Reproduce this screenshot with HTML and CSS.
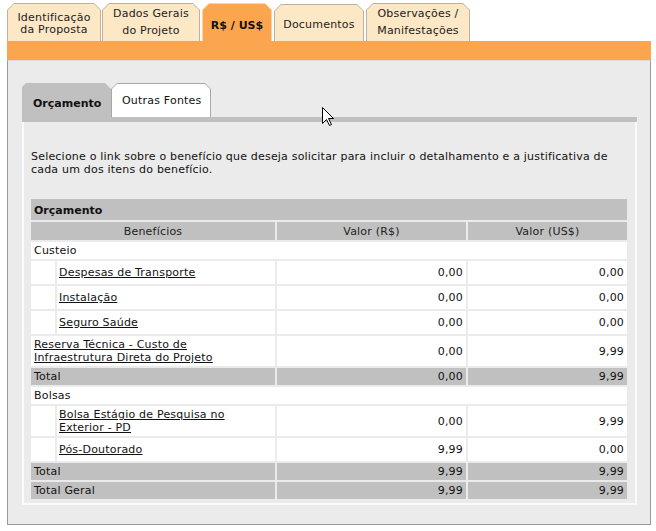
FILE: index.html
```html
<!DOCTYPE html>
<html lang="pt">
<head>
<meta charset="utf-8">
<title>Orçamento</title>
<link rel="stylesheet" href="styles.css">
</head>
<body>
<div class="page">
  <div class="tabs">
    <div class="tab t1"><div class="tab-in two-tight">Identificação<br>da Proposta</div></div>
    <div class="tab t2"><div class="tab-in two">Dados Gerais<br>do Projeto</div></div>
    <div class="tab t3 active"><div class="tab-in">R$ / US$</div></div>
    <div class="tab t4"><div class="tab-in">Documentos</div></div>
    <div class="tab t5"><div class="tab-in two">Observações /<br>Manifestações</div></div>
  </div>
  <div class="bar"></div>
  <div class="panel">
    <div class="subtabs">
      <div class="subtab sub-active">Orçamento</div>
      <div class="subtab sub-idle"><div class="sub-in">Outras Fontes</div></div>
    </div>
    <div class="subbar"></div>
    <div class="content">
      <p class="intro">Selecione o link sobre o benefício que deseja solicitar para incluir o detalhamento e a justificativa de cada um dos itens do benefício.</p>
      <table class="budget">
        <colgroup>
          <col class="c-ind"><col class="c-name"><col class="c-brl"><col class="c-usd">
        </colgroup>
        <tr class="title"><td colspan="4">Orçamento</td></tr>
        <tr class="head"><td colspan="2">Benefícios</td><td>Valor (R$)</td><td>Valor (US$)</td></tr>
        <tr class="group"><td colspan="4">Custeio</td></tr>
        <tr class="item"><td></td><td class="name"><a href="#">Despesas de Transporte</a></td><td class="num">0,00</td><td class="num">0,00</td></tr>
        <tr class="item"><td></td><td class="name"><a href="#">Instalação</a></td><td class="num">0,00</td><td class="num">0,00</td></tr>
        <tr class="item"><td></td><td class="name"><a href="#">Seguro Saúde</a></td><td class="num">0,00</td><td class="num">0,00</td></tr>
        <tr class="item"><td colspan="2"><a href="#">Reserva Técnica - Custo de<br>Infraestrutura Direta do Projeto</a></td><td class="num">0,00</td><td class="num">9,99</td></tr>
        <tr class="total"><td colspan="2">Total</td><td class="num">0,00</td><td class="num">9,99</td></tr>
        <tr class="group"><td colspan="4">Bolsas</td></tr>
        <tr class="item"><td></td><td class="name"><a href="#">Bolsa Estágio de Pesquisa no<br>Exterior - PD</a></td><td class="num">0,00</td><td class="num">9,99</td></tr>
        <tr class="item"><td></td><td class="name"><a href="#">Pós-Doutorado</a></td><td class="num">9,99</td><td class="num">0,00</td></tr>
        <tr class="total"><td colspan="2">Total</td><td class="num">9,99</td><td class="num">9,99</td></tr>
        <tr class="total"><td colspan="2">Total Geral</td><td class="num">9,99</td><td class="num">9,99</td></tr>
      </table>
    </div>
    <svg class="cursor" width="13" height="20" viewBox="0 0 13 20"><path d="M0.5 0.5 L0.5 16.5 L4.5 12.5 L7.5 18.5 L9.5 17.5 L6.5 11.5 L11.5 11.5 Z" fill="#fff" stroke="#000" stroke-width="1"/></svg>
  </div>
</div>
</body>
</html>
```

FILE: styles.css
```css
* { box-sizing: border-box; }
html, body { margin: 0; padding: 0; background: #fff; }
body {
  font-family: "DejaVu Sans", Verdana, sans-serif;
  font-size: 11px;
  letter-spacing: 0.2px;
  line-height: 13px;
  color: #111;
}
.page { width: 656px; height: 531px; padding: 3px 0 0 7px; }
.tabs { display: flex; align-items: flex-end; height: 38px; }
.tab {
  height: 38px;
  padding: 1px 1px 0 1px;
  background: #bfb19d;
  clip-path: polygon(7px 0, calc(100% - 7px) 0, 100% 7px, 100% 100%, 0 100%, 0 7px);
  margin-right: 2px;
}
.tab-in {
  height: 100%;
  background: #fde8c6;
  clip-path: polygon(6px 0, calc(100% - 6px) 0, 100% 6px, 100% 100%, 0 100%, 0 6px);
  display: flex;
  align-items: center;
  justify-content: center;
  text-align: center;
  color: #222;
}
.two { line-height: 17px; padding-bottom: 2px; }
.two-tight { line-height: 12px; padding-top: 3px; }
.t1 { width: 94px; margin-right: 1px; }
.t2 { width: 98px; }
.t3 { width: 70px; margin-right: 2px; }
.t4 { width: 90px; height: 37px; }
.t4 .tab-in { padding-top: 3px; }
.t5 { width: 104px; }
.active { background: #fdd3a3; }
.active .tab-in { background: #fba64f; font-weight: bold; letter-spacing: 0; color: #111; padding-top: 5px; }
.bar { width: 644px; height: 19px; background: #fba64f; }
.panel {
  position: relative;
  width: 644px;
  height: 465px;
  background: #ebebeb;
  border: 1px solid #999;
  border-top-color: #d8d8d8;
  padding: 22px 0 0 14px;
}
.subtabs { display: flex; align-items: flex-end; height: 34px; }
.subtab { height: 34px; }
.sub-active {
  width: 89px;
  height: 39px;
  margin-bottom: -5px;
  background: #c0c0c0;
  font-weight: bold;
  letter-spacing: 0;
  padding: 14px 0 0 11px;
  clip-path: polygon(4px 0, calc(100% - 6px) 0, 100% 6px, 100% 100%, 0 100%, 0 4px);
  position: relative;
  z-index: 1;
}
.sub-idle {
  width: 100px;
  padding: 1px 1px 0 1px;
  background: #a8a8a8;
  clip-path: polygon(6px 0, calc(100% - 6px) 0, 100% 6px, 100% 100%, 0 100%, 0 6px);
}
.sub-in {
  height: 100%;
  background: #fff;
  clip-path: polygon(5px 0, calc(100% - 5px) 0, 100% 5px, 100% 100%, 0 100%, 0 5px);
  padding: 10px 0 0 10px;
}
.subbar { width: 615px; height: 5px; background: #c0c0c0; }
.content {
  width: 615px;
  height: 383px;
  border: 2px solid #fafafa;
  border-top: none;
  padding: 28px 6px 0 5px;
}
.intro { margin: 0 0 21px 2px; color: #111; }
.budget {
  width: 600px;
  border-collapse: separate;
  border-spacing: 2px;
  table-layout: fixed;
  background: #ebebeb;
}
.c-ind { width: 24px; }
.c-name { width: 218px; }
.c-brl { width: 189px; }
.c-usd { width: 159px; }
.budget td { padding: 2px 3px; background: #fff; vertical-align: middle; }
.budget td.name { padding-left: 2px; }
.budget tr.title td { background: #c0c0c0; font-weight: bold; letter-spacing: 0; padding: 5px 3px 3px; }
.budget tr.head td { background: #c0c0c0; text-align: center; padding: 3px 3px 2px; color: #222; }
.budget tr.total td { background: #c0c0c0; }
.budget tr.item { height: 23px; }
.budget td.num { text-align: right; }
.budget a { color: #111; text-decoration: underline; }
.cursor { position: absolute; left: 314px; top: 46px; }
```
